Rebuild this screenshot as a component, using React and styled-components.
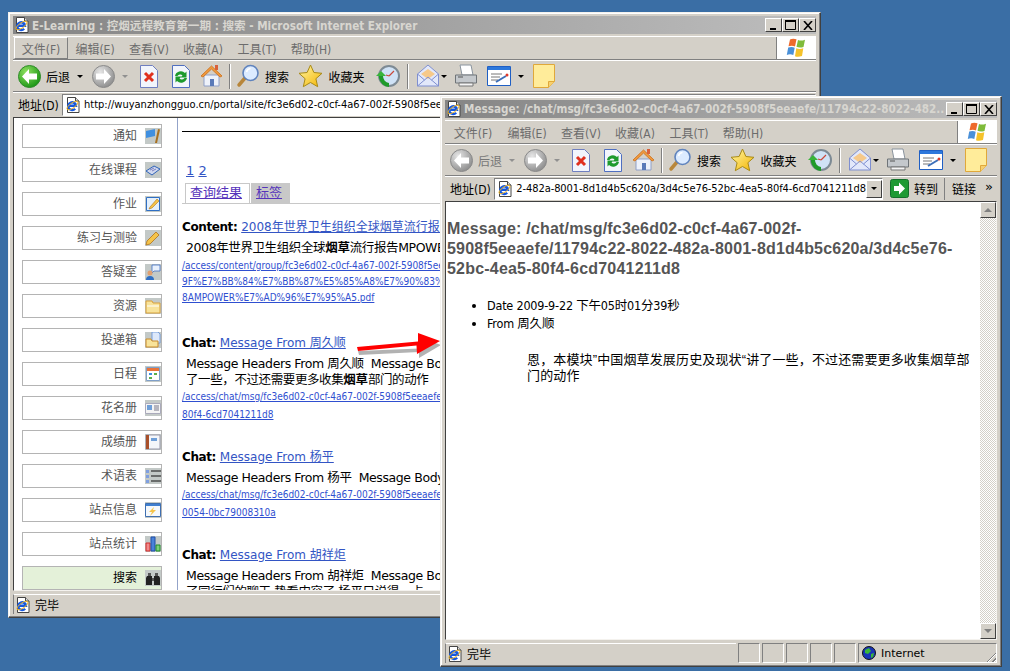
import React from "react";
import styled, { createGlobalStyle } from "styled-components";

const uiFont = `"DejaVu Sans", "Noto Sans CJK SC", sans-serif`;

const GlobalStyle = createGlobalStyle`
  html, body {
    margin: 0;
    padding: 0;
    background: #3a6ea5;
  }
  * {
    box-sizing: border-box;
  }
`;

const PAGE_URL =
  "http://wuyanzhongguo.cn/portal/site/fc3e6d02-c0cf-4a67-002f-5908f5eeaefe/tool/search";
const MSG_URL = "c22-482a-8001-8d1d4b5c620a/3d4c5e76-52bc-4ea5-80f4-6cd7041211d8";

const IeDoc = ({ size = 16 }) => (
  <svg width={size} height={size} viewBox="0 0 16 16">
    <path d="M2.5.5h8l3.5 3.500v11.500h-11.500z" fill="#fff" stroke="#444" />
    <path d="M10.500.5v3.500h3.500" fill="#ddd" stroke="#444" />
    <path d="M3.800 8.800h7.200a3.900 3.900 0 1 0-.9 2.900" fill="none" stroke="#1558e0" strokeWidth="2.400" />
    <ellipse cx="7.500" cy="8.500" rx="6.500" ry="2.500" fill="none" stroke="#f2b21c" strokeWidth=".9" transform="rotate(-35 7.500 8.500)" />
  </svg>
);

const NavCircle = ({ on }) => (
  <svg width="23" height="23" viewBox="0 0 23 23">
    <defs>
      <radialGradient id={on ? "navOn" : "navOff"} cx="35%" cy="30%" r="80%">
        <stop offset="0" stopColor={on ? "#8fe060" : "#e6e6e6"} />
        <stop offset="1" stopColor={on ? "#12900f" : "#868686"} />
      </radialGradient>
    </defs>
    <circle cx="11.500" cy="11.500" r="11" fill={`url(#${on ? "navOn" : "navOff"})`} stroke={on ? "#2f8a2a" : "#8a8a8a"} />
  </svg>
);

const NavArrow = ({ dir, on }) => (
  <ArrowWrap>
    <NavCircle on={on} />
    <ArrowOver width="23" height="23" viewBox="0 0 23 23">
      <path
        d={dir === "left" ? "M11 4l-7 7.500 7 7.500v-4.500h8v-6h-8z" : "M12 4l7 7.500-7 7.500v-4.500H4v-6h8z"}
        fill="#fff"
      />
    </ArrowOver>
  </ArrowWrap>
);

const StopIcon = () => (
  <svg width="20" height="23" viewBox="0 0 20 23">
    <path d="M1.500.5h12l5 5v17h-17z" fill="#f2f5fc" stroke="#6f7fc0" />
    <path d="M6 8l8 8M14 8l-8 8" stroke="#e0301e" strokeWidth="3" />
  </svg>
);

const RefreshIcon = () => (
  <svg width="20" height="23" viewBox="0 0 20 23">
    <path d="M1.500.5h12l5 5v17h-17z" fill="#f2f5fc" stroke="#4f6fc0" />
    <path d="M4 11a6 6 0 0 1 10-3l1.500-1.500v6h-6l2-2a3 3 0 0 0-5 .5z" fill="#1d9a2d" />
    <path d="M16 13a6 6 0 0 1-10 3l-1.500 1.500v-6h6l-2 2a3 3 0 0 0 5-.5z" fill="#1d9a2d" />
  </svg>
);

const HomeIcon = () => (
  <svg width="23" height="24" viewBox="0 0 23 24">
    <path d="M4 11h15v11H4z" fill="#eef2fa" stroke="#8fa0c8" />
    <path d="M1 12L11.500 2 22 12l-2 1-8.500-8L3 13z" fill="#f09a3e" stroke="#d07a2a" />
    <path d="M15 1h3v5h-3z" fill="#d9603a" />
    <path d="M10 15h4v7h-4z" fill="#5a7ab8" />
  </svg>
);

const SearchIcon = () => (
  <svg width="24" height="24" viewBox="0 0 24 24">
    <path d="M9 14l-6 7" stroke="#b8863a" strokeWidth="3.500" strokeLinecap="round" />
    <circle cx="14.500" cy="9" r="7.500" fill="#dcebff" stroke="#5f83bd" strokeWidth="1.600" />
    <path d="M10.500 8a4.500 4.500 0 0 1 4-3.500" stroke="#fff" strokeWidth="1.600" fill="none" />
  </svg>
);

const StarIcon = () => (
  <svg width="25" height="24" viewBox="0 0 25 24">
    <defs>
      <linearGradient id="starFill" x1="0" y1="0" x2="1" y2="1">
        <stop offset="0" stopColor="#fff7a8" />
        <stop offset="1" stopColor="#f4b400" />
      </linearGradient>
    </defs>
    <path d="M12.500 1l3.400 7.500 8.100.8-6.100 5.400 1.800 8-7.200-4.200-7.200 4.200 1.800-8L1 9.300l8.100-.8z" fill="url(#starFill)" stroke="#a88a18" />
  </svg>
);

const HistoryIcon = () => (
  <svg width="24" height="24" viewBox="0 0 24 24">
    <circle cx="13" cy="12" r="10" fill="#cfe2f6" stroke="#7d8a94" strokeWidth="2" />
    <path d="M13 12l5-5M13 12l-3-1" stroke="#c9483a" strokeWidth="1.200" />
    <path d="M3 12h4a7 7 0 0 0 6 7v4A11 11 0 0 1 3 14z" fill="#1f9a2a" />
    <path d="M0 12l5-5 5 5z" fill="#38b43a" />
  </svg>
);

const MailIcon = () => (
  <svg width="24" height="24" viewBox="0 0 24 24">
    <path d="M1.500 10L12 1l10.500 9v12h-21z" fill="#e2e8fa" stroke="#7f8fd0" />
    <path d="M5 10l7-5 7 5-7 5z" fill="#f6c98a" />
    <path d="M1.500 22L12 13l10.500 9M1.500 10l7 6M22.500 10l-7 6" fill="none" stroke="#7f8fd0" />
  </svg>
);

const PrintIcon = () => (
  <svg width="24" height="24" viewBox="0 0 24 24">
    <path d="M6 1h11l2 10H8z" fill="#fff" stroke="#8a949e" />
    <path d="M1.500 11h21v8h-21z" fill="#c4c8cc" stroke="#6f7478" />
    <path d="M5 19h14v3H5z" fill="#f4f4f4" stroke="#777" />
    <path d="M4 13h5" stroke="#555" />
  </svg>
);

const EditIcon = () => (
  <svg width="24" height="22" viewBox="0 0 24 22">
    <path d="M.5 1.500h23v19H.5z" fill="#fff" stroke="#1f5fc4" />
    <path d="M1 2h22v3H1z" fill="#2d78dc" />
    <path d="M4 9h11M4 12h9M4 15h7" stroke="#777" />
    <path d="M9 17l10-6" stroke="#3d6fb8" strokeWidth="2" />
    <circle cx="20" cy="10" r="1.500" fill="#e03a2a" />
  </svg>
);

const NoteIcon = () => (
  <svg width="22" height="24" viewBox="0 0 22 24">
    <path d="M.5.500h21v17l-6 6H.500z" fill="#ffec9a" stroke="#e0a83a" />
    <path d="M15.500 23.500v-6h6" fill="#f6d070" stroke="#e0a83a" />
  </svg>
);

const WinFlag = () => (
  <svg width="22" height="20" viewBox="0 0 22 20">
    <path d="M4 1.500q3-1.500 6.500-.2L9 8.500Q6 7 2.500 8.300z" fill="#ee6a2c" />
    <path d="M12 2q3 1.300 7-.3L17.500 9q-4 1.300-7-.2z" fill="#7fbb3a" />
    <path d="M2.200 9.500q3.500-1.300 6.500.2L7.300 17Q4 15.500.8 17z" fill="#4a90d8" />
    <path d="M10.300 10.200q3 1.400 7 .1L16 18q-4 1.500-7 .2z" fill="#f5c22a" />
  </svg>
);

const GoIcon = () => (
  <svg width="19" height="19" viewBox="0 0 19 19">
    <rect x=".5" y=".5" width="18" height="18" rx="2" fill="#1f9a34" stroke="#14702a" />
    <path d="M9 3.500l6 6-6 6v-3.500H4V7h5z" fill="#fff" />
  </svg>
);

const GlobeIcon = () => (
  <svg width="14" height="14" viewBox="0 0 14 14">
    <circle cx="7" cy="7" r="6.500" fill="#1a34b8" stroke="#111" />
    <path d="M3 4l4-2 2 3-3 3-3-1zM9 8l3-1-1 4-2 1z" fill="#3ab83a" />
  </svg>
);

// sidebar tool icons, all 16x16 on the grey tile
const toolIcons = {
  flag: (
    <>
      <path d="M1 3l9-2v7l-9 2z" fill="#3f8fe0" />
      <path d="M13 1l2 .5L12 15h-2z" fill="#a8701f" />
    </>
  ),
  book: (
    <>
      <path d="M1 9l8-5 6 3-8 6z" fill="#cfd8ef" stroke="#2f63b8" />
      <path d="M5 8l4-2M7 9l4-2" stroke="#7a7fc0" />
    </>
  ),
  note: (
    <>
      <path d="M1.500 1.500h13v13h-13z" fill="#e4f0fc" stroke="#2f6fc4" />
      <path d="M5 11l7-8 2 2-7 7-3 1z" fill="#f5c44a" stroke="#b0741a" strokeWidth=".6" />
    </>
  ),
  pencil: <path d="M1 15l1-4 9-9 3 3-9 9z" fill="#f5c44a" stroke="#b0741a" strokeWidth=".8" />,
  person: (
    <>
      <path d="M7 1h8v6H9L7 9z" fill="#e8f0fc" stroke="#3f6fc4" strokeWidth=".8" />
      <circle cx="5" cy="9" r="2.500" fill="#e0a070" />
      <path d="M1 16q0-4 4-4t4 4z" fill="#2f6fc4" />
    </>
  ),
  folder: (
    <>
      <path d="M1 3h6l1 2h7v10H1z" fill="#f8e39a" stroke="#d8a03a" />
      <path d="M2 8h12" stroke="#fff" />
    </>
  ),
  dropbox: (
    <>
      <path d="M7 0h6l2 2v9H7z" fill="#dde8fa" stroke="#5f8fd8" strokeWidth=".8" />
      <path d="M1 7h5l1 2h6v6H1z" fill="#f8e39a" stroke="#c88a2a" />
    </>
  ),
  calendar: (
    <>
      <path d="M1.500 1.500h13v13h-13z" fill="#fff" stroke="#7f9fc8" />
      <path d="M2 2h12v3H2z" fill="#e8743a" />
      <path d="M4 7h3v2H4z" fill="#3f8fe0" />
      <path d="M9 7h3v2H9z" fill="#5ab04a" />
      <path d="M4 11h3v2H4z" fill="#5ab04a" />
    </>
  ),
  card: (
    <>
      <path d="M.5 3.500h15v10H.500z" fill="#f4f4f4" stroke="#aab" />
      <path d="M2 5h5v5H2z" fill="#6f9fd8" />
      <path d="M9 6h5M9 8h5M9 10h5" stroke="#778" />
    </>
  ),
  grades: (
    <>
      <path d="M1 1h14v14H1z" fill="#f4f6fa" stroke="#99a" />
      <path d="M1 1h3v14H1z" fill="#a8502a" />
      <path d="M6 4h6v3H6z" fill="#6f9fd8" />
    </>
  ),
  list: (
    <>
      <path d="M1 2h3v3H1zM1 7h3v3H1zM1 12h3v3H1z" fill="#7f9fe0" />
      <path d="M6 3h10M6 8h10M6 13h10" stroke="#111" strokeWidth="1.200" />
    </>
  ),
  info: (
    <>
      <path d="M.5 1.500h15v13H.500z" fill="#f4f8fc" stroke="#3f6fb0" />
      <path d="M1 2h14v2H1z" fill="#3f7fd0" />
      <path d="M9 5L4 10h3l-2 4 6-6H8z" fill="#f5c44a" />
    </>
  ),
  chart: (
    <>
      <path d="M1 7h4v8H1z" fill="#f08a8a" stroke="#d02a2a" />
      <path d="M6 1h4v14H6z" fill="#4a82d8" stroke="#1f4fa8" />
      <path d="M11 9h4v6h-4z" fill="#7ed07a" stroke="#1f8a2a" />
    </>
  ),
  binoculars: (
    <>
      <path d="M2 6h5v9H1V8zM9 6h5l1 2v7H9z" fill="#222" />
      <path d="M3 3h3v3H3zM10 3h3v3h-3zM7 8h2v3H7z" fill="#555" />
    </>
  ),
};

const sideItems = [
  ["通知", "flag"],
  ["在线课程", "book"],
  ["作业", "note"],
  ["练习与测验", "pencil"],
  ["答疑室", "person"],
  ["资源", "folder"],
  ["投递箱", "dropbox"],
  ["日程", "calendar"],
  ["花名册", "card"],
  ["成绩册", "grades"],
  ["术语表", "list"],
  ["站点信息", "info"],
  ["站点统计", "chart"],
  ["搜索", "binoculars"],
];

const menus = ["文件(F)", "编辑(E)", "查看(V)", "收藏(A)", "工具(T)", "帮助(H)"];

function Chrome({ title, frontMenu, active, address, wide, children, status }) {
  return (
    <>
      <TitleBar>
        <IeDoc />
        <TitleText>{title}</TitleText>
        <CaptionGroup>
          <CaptionButton>
            <svg width="9" height="9" viewBox="0 0 9 9"><path d="M1 7h6v2H1z" /></svg>
          </CaptionButton>
          <CaptionButton>
            <svg width="11" height="10" viewBox="0 0 11 10"><path d="M.5 1.500h10v8H.500z" fill="none" stroke="#000" /><path d="M0 0h11v2H0z" /></svg>
          </CaptionButton>
          <CaptionButton>
            <svg width="10" height="9" viewBox="0 0 10 9"><path d="M1 0l8 9M9 0L1 9" stroke="#000" strokeWidth="1.600" /></svg>
          </CaptionButton>
        </CaptionGroup>
      </TitleBar>
      <MenuRow>
        <MenuItems>
          {menus.map((m, i) => (
            <MenuItem key={m} $raised={frontMenu && i === 0}>{m}</MenuItem>
          ))}
        </MenuItems>
        <FlagCell><WinFlag /></FlagCell>
      </MenuRow>
      <Toolbar>
        <ToolSlot $w={56} $start $dim={!active}>
          <NavArrow dir="left" on={active} />
          <ToolLabel>后退</ToolLabel>
        </ToolSlot>
        <ToolSlot $w={12}><Caret $dim={!active} /></ToolSlot>
        <ToolSlot $w={34}><NavArrow dir="right" /></ToolSlot>
        <ToolSlot $w={10}><Caret $dim /></ToolSlot>
        <ToolSlot $w={37}><StopIcon /></ToolSlot>
        <ToolSlot $w={27}><RefreshIcon /></ToolSlot>
        <ToolSlot $w={35}><HomeIcon /></ToolSlot>
        <ToolSep />
        <ToolSlot $w={63}>
          <SearchIcon />
          <ToolLabel>搜索</ToolLabel>
        </ToolSlot>
        <ToolSlot $w={75}>
          <StarIcon />
          <ToolLabel>收藏夹</ToolLabel>
        </ToolSlot>
        <ToolSlot $w={38}><HistoryIcon /></ToolSlot>
        <ToolSep />
        <ToolSlot $w={31} $end><MailIcon /></ToolSlot>
        <ToolSlot $w={8}><Caret /></ToolSlot>
        <ToolSlot $w={36}><PrintIcon /></ToolSlot>
        <ToolSlot $w={29}><EditIcon /></ToolSlot>
        <ToolSlot $w={16}><Caret /></ToolSlot>
        <ToolSlot $w={30}><NoteIcon /></ToolSlot>
      </Toolbar>
      <AddressRow>
        <AddressLabel>地址(D)</AddressLabel>
        <AddressBox>
          <IeDoc />
          <AddressText $tail={wide}><span>{address}</span></AddressText>
          {wide && (
            <ComboButton>
              <Caret />
            </ComboButton>
          )}
        </AddressBox>
        {wide && (
          <>
            <GoButton>
              <GoIcon />
              <span>转到</span>
            </GoButton>
            <LinksCell>
              链接<Chevrons>»</Chevrons>
            </LinksCell>
          </>
        )}
      </AddressRow>
      <Viewport>{children}</Viewport>
      <StatusBar>
        <StatusMain>
          <IeDoc />
          <span>完毕</span>
        </StatusMain>
        {status}
      </StatusBar>
    </>
  );
}

function SearchResult({ kind, titleText, snippet, links, tight }) {
  return (
    <Result $tight={tight}>
      <ResultHead>
        <b>{kind}:</b> <TitleLink>{titleText}</TitleLink>
      </ResultHead>
      <SnippetGroup>
        {snippet.map((line, i) => (
          <Snippet key={i}>{line}</Snippet>
        ))}
      </SnippetGroup>
      <LinkGroup $tight={tight}>
        {links.map((l) => (
          <SmallLink key={l} $tight={tight}>{l}</SmallLink>
        ))}
      </LinkGroup>
    </Result>
  );
}

export default function App() {
  return (
    <Desktop>
      <GlobalStyle />
      <BrowserWindow $left={8} $top={12} $width={813} $height={606}>
        <Chrome
          title="E-Learning : 控烟远程教育第一期 : 搜索 - Microsoft Internet Explorer"
          frontMenu
          active
          address={PAGE_URL}
        >
          <Sidebar>
            {sideItems.map(([label, icon]) => (
              <SideItem key={label} $current={label === "搜索"}>
                <SideLabel>{label}</SideLabel>
                <ToolTile>
                  <svg width="16" height="16" viewBox="0 0 16 16">{toolIcons[icon]}</svg>
                </ToolTile>
              </SideItem>
            ))}
          </Sidebar>
          <Main>
            <Rule />
            <Pager>
              <PagerLink>1</PagerLink> <PagerLink>2</PagerLink>
            </Pager>
            <Tabs>
              <Tab $selected><TabLink>查询结果</TabLink></Tab>
              <Tab><TabLink>标签</TabLink></Tab>
            </Tabs>
            <SearchResult
              tight
              kind="Content"
              titleText="2008年世界卫生组织全球烟草流行报告"
              snippet={[<>2008年世界卫生组织全球<b>烟草</b>流行报告MPOWER策略</>]}
              links={[
                "/access/content/group/fc3e6d02-c0cf-4a67-002f-5908f5eeaefe/%E5%9F",
                "9F%E7%BB%84%E7%BB%87%E5%85%A8%E7%90%83%E7%83%9F%E8%8D%89",
                "8AMPOWER%E7%AD%96%E7%95%A5.pdf",
              ]}
            />
            <SearchResult
              kind="Chat"
              titleText="Message From 周久顺"
              snippet={[
                "Message Headers From 周久顺\u00a0\u00a0Message Body 恩，本模块",
                <>了一些，不过还需要更多收集<b>烟草</b>部门的动作</>,
              ]}
              links={["/access/chat/msg/fc3e6d02-c0cf-4a67-002f-5908f5eeaefe/11794c22", "80f4-6cd7041211d8"]}
            />
            <SearchResult
              kind="Chat"
              titleText="Message From 杨平"
              snippet={["Message Headers From 杨平\u00a0\u00a0Message Body 好的"]}
              links={["/access/chat/msg/fc3e6d02-c0cf-4a67-002f-5908f5eeaefe/11794c22", "0054-0bc79008310a"]}
            />
            <SearchResult
              kind="Chat"
              titleText="Message From 胡祥炬"
              snippet={["Message Headers From 胡祥炬\u00a0\u00a0Message Body 恩", "了同行们的聊天 势看内容了 杨平只说得，占"]}
              links={[]}
            />
          </Main>
        </Chrome>
      </BrowserWindow>

      <RedArrow width="90" height="30" viewBox="0 0 90 30">
        <path d="M1 17l61-2.500V3l22 8-22 13v-6L2 21z" fill="#000" opacity=".3" transform="translate(1 4)" />
        <path d="M1 17l61-5.500V3l22 8-23 13-.5-8.500L2 21z" fill="#f00" />
      </RedArrow>

      <BrowserWindow $left={440} $top={96} $width={562} $height={571}>
        <Chrome
          title="Message: /chat/msg/fc3e6d02-c0cf-4a67-002f-5908f5eeaefe/11794c22-8022-482..."
          address={MSG_URL}
          wide
          status={
            <>
              <StatusCell />
              <StatusCell />
              <StatusCell />
              <StatusCell />
              <StatusCell />
              <ZoneCell>
                <GlobeIcon />
                <span>Internet</span>
                <Grip />
              </ZoneCell>
            </>
          }
        >
          <MessagePage>
            <MessageTitle>
              Message: /chat/msg/fc3e6d02-c0cf-4a67-002f-
              <br />
              5908f5eeaefe/11794c22-8022-482a-8001-8d1d4b5c620a/3d4c5e76-
              <br />
              52bc-4ea5-80f4-6cd7041211d8
            </MessageTitle>
            <MetaList>
              <li>Date 2009-9-22 下午05时01分39秒</li>
              <li>From 周久顺</li>
            </MetaList>
            <MessageBody>
              恩，本模块”中国烟草发展历史及现状“讲了一些，不过还需要更多收集烟草部门的动作
            </MessageBody>
          </MessagePage>
          <ScrollBar>
            <ScrollButton><ScrollCaret $up /></ScrollButton>
            <ScrollButton><ScrollCaret /></ScrollButton>
          </ScrollBar>
        </Chrome>
      </BrowserWindow>
    </Desktop>
  );
}

const Desktop = styled.div`
  position: relative;
  width: 1010px;
  height: 671px;
  overflow: hidden;
  background: #3a6ea5;
  font-family: ${uiFont};
`;

const BrowserWindow = styled.div`
  position: absolute;
  left: ${(p) => p.$left}px;
  top: ${(p) => p.$top}px;
  width: ${(p) => p.$width}px;
  height: ${(p) => p.$height}px;
  display: flex;
  flex-direction: column;
  padding: 3px 4px 3px 4px;
  background: #d4d0c8;
  border: 1px solid;
  border-color: #f4f2ee #404040 #404040 #f4f2ee;
  box-shadow: inset -1px -1px 0 #808080, inset 1px 1px 0 #fff;
`;

const TitleBar = styled.div`
  flex: none;
  height: 18px;
  display: flex;
  align-items: center;
  gap: 2px;
  padding: 0 0 0 1px;
  background: linear-gradient(90deg, #858585, #bdbdbd);
`;

const TitleText = styled.div`
  flex: 1;
  min-width: 0;
  overflow: hidden;
  white-space: nowrap;
  font-size: 11.600px;
  font-weight: 700;
  font-stretch: condensed;
  color: #d8d6d0;
`;

const CaptionGroup = styled.div`
  display: flex;
  flex: none;
`;

const CaptionButton = styled.div`
  width: 17px;
  height: 14px;
  display: flex;
  align-items: center;
  justify-content: center;
  background: #d4d0c8;
  border: 1px solid;
  border-color: #fff #404040 #404040 #fff;
`;

const MenuRow = styled.div`
  flex: none;
  height: 24px;
  margin-top: 2px;
  display: flex;
  border-top: 1px solid #fff;
  border-bottom: 1px solid #808080;
`;

const MenuItems = styled.div`
  flex: 1;
  display: flex;
  padding-left: 1px;
  align-items: stretch;
  border-right: 1px solid #808080;
`;

const MenuItem = styled.div`
  width: 54px;
  display: flex;
  align-items: center;
  justify-content: center;
  font-size: 12px;
  font-stretch: condensed;
  color: #6c6c6c;
  border: 1px solid transparent;
  ${(p) => p.$raised && "border-color: #fff #808080 #808080 #fff;"}
`;

const FlagCell = styled.div`
  flex: none;
  width: 39px;
  display: flex;
  align-items: center;
  justify-content: center;
  background: #fff;
`;

const Toolbar = styled.div`
  flex: none;
  height: 32px;
  display: flex;
  align-items: center;
  padding-left: 5px;
  border-top: 1px solid #fff;
  border-bottom: 1px solid #808080;
`;

const ToolSlot = styled.div`
  flex: none;
  width: ${(p) => p.$w}px;
  display: flex;
  align-items: center;
  justify-content: ${(p) => (p.$start ? "flex-start" : p.$end ? "flex-end" : "center")};
  gap: 5px;
  color: ${(p) => (p.$dim ? "#777" : "#000")};
`;

const ToolLabel = styled.span`
  font-size: 12px;
  white-space: nowrap;
`;

const ToolSep = styled.div`
  flex: none;
  width: 2px;
  height: 25px;
  border-left: 1px solid #808080;
  border-right: 1px solid #fff;
`;

const ArrowWrap = styled.div`
  position: relative;
  width: 23px;
  height: 23px;
  flex: none;
`;

const ArrowOver = styled.svg`
  position: absolute;
  left: 0;
  top: 0;
`;

const Caret = styled.i`
  width: 0;
  height: 0;
  border-left: 3px solid transparent;
  border-right: 3px solid transparent;
  border-top: 3px solid ${(p) => (p.$dim ? "#909090" : "#000")};
`;

const AddressRow = styled.div`
  flex: none;
  height: 24px;
  display: flex;
  align-items: center;
  padding-left: 5px;
  border-top: 1px solid #fff;
`;

const AddressLabel = styled.div`
  flex: none;
  width: 44px;
  font-size: 12px;
  font-stretch: condensed;
`;

const AddressBox = styled.div`
  flex: 1;
  min-width: 0;
  height: 22px;
  display: flex;
  align-items: center;
  padding-left: 2px;
  background: #fff;
  border: 1px solid;
  border-color: #808080 #fff #fff #808080;
  & > svg {
    flex: none;
    margin-right: 3px;
  }
`;

const AddressText = styled.div`
  flex: 1;
  min-width: 0;
  display: flex;
  justify-content: ${(p) => (p.$tail ? "flex-end" : "flex-start")};
  overflow: hidden;
  white-space: nowrap;
  font-size: 11px;
  font-stretch: condensed;
  letter-spacing: ${(p) => (p.$tail ? "-0.08px" : "0")};
`;

const ComboButton = styled.div`
  flex: none;
  width: 16px;
  height: 18px;
  display: flex;
  align-items: center;
  justify-content: center;
  background: #d4d0c8;
  border: 1px solid;
  border-color: #fff #404040 #404040 #fff;
`;

const GoButton = styled.div`
  flex: none;
  width: 61px;
  height: 22px;
  display: flex;
  align-items: center;
  gap: 5px;
  padding-left: 7px;
  font-size: 12px;
`;

const LinksCell = styled.div`
  flex: none;
  width: 53px;
  height: 22px;
  display: flex;
  align-items: center;
  justify-content: space-between;
  padding: 0 4px 0 7px;
  font-size: 12px;
  border-left: 1px solid #808080;
`;

const Chevrons = styled.span`
  font-size: 13px;
  line-height: 13px;
  margin-top: -4px;
`;

const Viewport = styled.div`
  flex: 1;
  min-height: 0;
  margin-top: 1px;
  display: flex;
  overflow: hidden;
  background: #fff;
  border: 1px solid;
  border-color: #404040 #f4f2ee #f4f2ee #404040;
`;

const Sidebar = styled.nav`
  flex: none;
  width: 164px;
  padding: 6px 0 0 8px;
  display: flex;
  flex-direction: column;
  gap: 10px;
  border-right: 1px solid #93a3c9;
`;

const SideItem = styled.div`
  height: 24px;
  width: 140px;
  display: flex;
  align-items: center;
  justify-content: flex-end;
  gap: 8px;
  font-size: 12px;
  color: ${(p) => (p.$current ? "#000" : "#555")};
  background: ${(p) => (p.$current ? "#e4f1d9" : "#fff")};
  border: 1px solid #b4b4b4;
`;

const SideLabel = styled.span`
  margin-bottom: 3px;
`;

const ToolTile = styled.div`
  width: 16px;
  height: 16px;
  flex: none;
  background: #c3c9c7;
`;

const Main = styled.main`
  flex: 1;
  min-width: 0;
  padding: 13px 0 0 4px;
  overflow: hidden;
  white-space: nowrap;
  font-size: 12px;
  color: #000;
`;

const Rule = styled.div`
  height: 1px;
  background: #000;
`;

const Pager = styled.div`
  margin: 30px 0 0 4px;
  height: 18px;
  line-height: 18px;
  font-size: 13px;
`;

const PagerLink = styled.a`
  color: #3355c4;
  text-decoration: underline;
`;

const Tabs = styled.div`
  display: flex;
  gap: 1px;
  margin-top: 3px;
  padding-left: 3px;
  height: 21px;
  border-bottom: 1px solid #c8c8c8;
`;

const Tab = styled.div`
  height: 20px;
  padding: 0 7px 0 4px;
  line-height: 18px;
  font-size: 13px;
  background: ${(p) => (p.$selected ? "#fff" : "#c8c8c8")};
  border: 1px solid #c8c8c8;
  border-bottom: none;
`;

const TabLink = styled.a`
  color: #5533bb;
  text-decoration: underline;
`;

const Result = styled.section`
  margin-top: 14px;
  margin-bottom: ${(p) => (p.$tight ? 28 : 24)}px;
  & b {
    letter-spacing: -0.2px;
  }
`;

const ResultHead = styled.div`
  height: 18px;
  line-height: 18px;
  font-size: 12px;
  & > b {
    letter-spacing: -0.4px;
  }
`;

const TitleLink = styled.a`
  font-size: 12px;
  color: #3355c4;
  text-decoration: underline;
`;

const SnippetGroup = styled.div`
  margin-top: 4px;
`;

const Snippet = styled.div`
  height: 16px;
  line-height: 16px;
  padding-left: 4px;
  font-size: 12.500px;
  letter-spacing: -0.4px;
`;

const LinkGroup = styled.div`
  display: flex;
  flex-direction: column;
  align-items: flex-start;
  padding-top: ${(p) => (p.$tight ? 2 : 0)}px;
`;

const SmallLink = styled.a`
  display: inline-block;
  height: ${(p) => (p.$tight ? 16 : 18)}px;
  line-height: ${(p) => (p.$tight ? 15 : 17)}px;
  font-size: 10px;
  font-stretch: condensed;
  color: #2f4fd0;
  text-decoration: underline;
`;

const MessagePage = styled.div`
  flex: 1;
  min-width: 0;
  padding: 17px 8px 0 1px;
`;

const MessageTitle = styled.h2`
  margin: 0;
  font-family: "Liberation Sans", sans-serif;
  font-size: 16px;
  line-height: 20px;
  font-weight: 700;
  letter-spacing: 0.2px;
  color: #555;
`;

const MetaList = styled.ul`
  margin: 18px 0 0;
  padding-left: 40px;
  font-size: 12.500px;
  letter-spacing: -0.2px;
  line-height: 18px;
  font-stretch: condensed;
`;

const MessageBody = styled.p`
  margin: 19px 0 0 80px;
  font-family: "Liberation Sans", "Noto Sans CJK SC", sans-serif;
  font-size: 13px;
  letter-spacing: 0.14px;
  line-height: 16px;
`;

const ScrollBar = styled.div`
  flex: none;
  width: 16px;
  display: flex;
  flex-direction: column;
  justify-content: space-between;
  background: repeating-conic-gradient(#fff 0 25%, #d4d0c8 0 50%) 0 0 / 2px 2px;
`;

const ScrollButton = styled.div`
  height: 16px;
  display: flex;
  align-items: center;
  justify-content: center;
  background: #d4d0c8;
  border: 1px solid;
  border-color: #fff #404040 #404040 #fff;
`;

const ScrollCaret = styled.i`
  width: 0;
  height: 0;
  border-left: 4px solid transparent;
  border-right: 4px solid transparent;
  ${(p) => (p.$up ? "border-bottom: 4px solid #808080;" : "border-top: 4px solid #808080;")}
`;

const StatusBar = styled.div`
  flex: none;
  height: 20px;
  margin-top: 3px;
  display: flex;
  align-items: stretch;
  gap: 2px;
  font-size: 12px;
`;

const StatusMain = styled.div`
  flex: 1;
  display: flex;
  align-items: center;
  gap: 4px;
  padding-left: 1px;
  border: 1px solid;
  border-color: #fff #fff #fff #808080;
  border-width: 1px 0 0 1px;
`;

const StatusCell = styled.div`
  flex: none;
  width: 22px;
  border: 1px solid;
  border-color: #808080 #fff #fff #808080;
`;

const ZoneCell = styled.div`
  position: relative;
  flex: none;
  width: 139px;
  display: flex;
  align-items: center;
  gap: 5px;
  padding-left: 3px;
  font-size: 11px;
  border: 1px solid;
  border-color: #808080 #fff #fff #808080;
`;

const Grip = styled.i`
  position: absolute;
  right: 0;
  bottom: 0;
  width: 12px;
  height: 12px;
  background: repeating-linear-gradient(135deg, transparent 0 2px, #808080 2px 3px, #fff 3px 4px);
  clip-path: polygon(100% 0, 100% 100%, 0 100%);
`;

const RedArrow = styled.svg`
  position: absolute;
  left: 356px;
  top: 330px;
`;
